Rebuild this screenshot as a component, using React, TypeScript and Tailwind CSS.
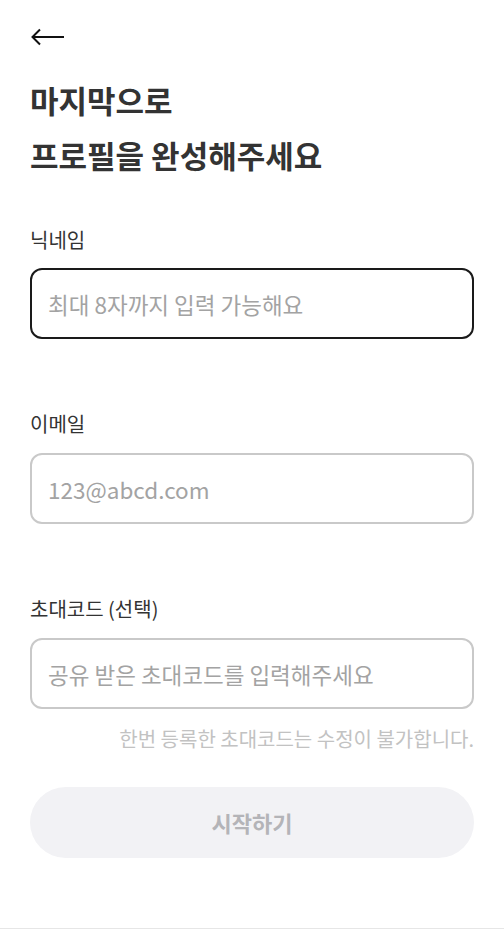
import { useState } from "react";

const font = "font-['Noto_Sans_CJK_KR','Noto_Sans',sans-serif]";

function Field({
  label,
  placeholder,
  focused,
}: {
  label: string;
  placeholder: string;
  focused?: boolean;
}) {
  const [value, setValue] = useState("");
  return (
    <div>
      <label className="block text-[20px] leading-[26px] text-[#333333]">{label}</label>
      <input
        value={value}
        onChange={(e) => setValue(e.target.value)}
        placeholder={placeholder}
        className={
          focused
            ? "mt-[15px] block h-[71px] w-full rounded-[12px] border-2 border-[#1a1a1a] px-[16px] text-[22.5px] text-[#222222] outline-none placeholder:text-[#a3a3a3]"
            : "mt-[16px] block h-[71px] w-full rounded-[12px] border-2 border-[#c9c9c9] px-[16px] text-[22.5px] text-[#222222] outline-none placeholder:text-[#a3a3a3]"
        }
      />
    </div>
  );
}

export default function App() {
  return (
    <div className={`${font} flex min-h-[929px] flex-col bg-white`}>
      <main className="flex-1 px-[30px] pt-[28px]">
        <button className="block" aria-label="뒤로가기">
          <svg width="34" height="18" viewBox="0 0 34 18" fill="none">
            <path d="M34 9H3M10 1.5 2.5 9l7.5 7.5" stroke="#111" strokeWidth="2" />
          </svg>
        </button>

        <h1 className="mt-[26px] text-[31px] font-bold leading-[55px] text-[#333333]">
          마지막으로
          <br />
          프로필을 완성해주세요
        </h1>

        <div className="mt-[45px]">
          <Field label="닉네임" placeholder="최대 8자까지 입력 가능해요" focused />
        </div>
        <div className="mt-[72px]">
          <Field label="이메일" placeholder="123@abcd.com" />
        </div>
        <div className="mt-[72px]">
          <Field label="초대코드 (선택)" placeholder="공유 받은 초대코드를 입력해주세요" />
        </div>

        <p className="mt-[18px] text-right text-[20px] leading-[24px] text-[#c2c2c2]">
          한번 등록한 초대코드는 수정이 불가합니다.
        </p>

        <button
          disabled
          className="mt-[36px] flex h-[71px] w-full items-center justify-center rounded-full bg-[#f2f2f5] text-[22px] font-bold text-[#b4b4b8]"
        >
          시작하기
        </button>
      </main>
      <div className="h-px bg-[#e6e6e6]" />
    </div>
  );
}
